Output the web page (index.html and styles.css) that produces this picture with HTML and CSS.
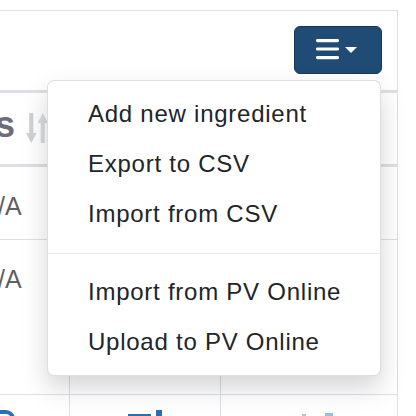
FILE: index.html
```html
<!DOCTYPE html>
<html lang="en">
<head>
<meta charset="utf-8">
<title>Ingredients</title>
<link rel="stylesheet" href="styles.css">
</head>
<body>
<div class="card">
  <div class="card-header">
    <div class="dropdown">
      <button class="btn-menu" type="button" aria-label="Menu">
        <svg class="bars" width="23" height="21" viewBox="0 0 23 21"><rect x="0" y="0" width="23" height="3.2" rx="1.4"/><rect x="0" y="8.4" width="23" height="3.2" rx="1.4"/><rect x="0" y="17" width="23" height="3.2" rx="1.4"/></svg>
        <svg class="caret" width="12" height="6" viewBox="0 0 12 6"><path d="M0 0H12L6 6Z"/></svg>
      </button>
      <div class="dropdown-menu">
        <a class="dropdown-item">Add new ingredient</a>
        <a class="dropdown-item">Export to CSV</a>
        <a class="dropdown-item">Import from CSV</a>
        <div class="dropdown-divider"></div>
        <a class="dropdown-item">Import from PV Online</a>
        <a class="dropdown-item">Upload to PV Online</a>
      </div>
    </div>
  </div>
  <div class="grid head">
    <div class="cell th"><span class="th-label">s</span><svg class="sort" width="22" height="30" viewBox="0 0 22 30"><path class="down" d="M3.2 0H7.3V20H10.5L5.25 30L0 20H3.2Z"/><path class="up" d="M18.8 30H14.7V10H11.5L16.75 0L22 10H18.8Z"/></svg></div>
    <div class="cell"></div>
    <div class="cell"></div>
  </div>
  <div class="grid row row1">
    <div class="cell td">N/A</div>
    <div class="cell"></div>
    <div class="cell"></div>
  </div>
  <div class="grid row row2">
    <div class="cell td">N/A</div>
    <div class="cell"></div>
    <div class="cell"></div>
  </div>
  <div class="grid row row3">
    <div class="cell icon-left"><svg width="34" height="34" viewBox="0 0 34 34"><rect x="2" y="2" width="29" height="29" rx="7" fill="none" stroke="#2f6fb3" stroke-width="4"/></svg></div>
    <div class="cell icon-center"><svg width="36" height="34" viewBox="0 0 36 34"><rect x="1" y="4" width="23" height="4" fill="#2d6cb0"/><rect x="29" y="0" width="6" height="8" fill="#2d6cb0"/></svg></div>
    <div class="cell icon-center"><svg width="52" height="34" viewBox="0 0 52 34"><rect x="19" y="4" width="4" height="3" fill="#a9c4e4"/><rect x="42" y="3" width="8" height="4" fill="#9fbde2"/></svg></div>
  </div>
</div>
</body>
</html>
```
FILE: styles.css
```css
html, body {
  margin: 0;
  padding: 0;
}
body {
  width: 416px;
  height: 416px;
  overflow: hidden;
  background: #ffffff;
  font-family: "Liberation Sans", Arial, sans-serif;
}
.card {
  margin: 10px 0 0 -32px;
  width: 430px;
  box-sizing: border-box;
  border: 1px solid #dfdfdf;
  border-bottom: none;
}
.card-header {
  height: 79px;
  box-sizing: border-box;
  padding: 15px 15px 0 0;
  display: flex;
  justify-content: flex-end;
  align-items: flex-start;
}
.dropdown {
  position: relative;
  height: 48px;
}
.btn-menu {
  width: 88px;
  height: 48px;
  box-sizing: border-box;
  margin: 0;
  padding: 0 0 0 21px;
  background: #1f4b74;
  border: 1px solid #15385a;
  border-radius: 6px;
  display: flex;
  align-items: center;
  gap: 6px;
}
.btn-menu svg {
  fill: #ffffff;
  display: block;
}
.bars {
  margin-top: -1px;
}
.dropdown-menu {
  position: absolute;
  top: 54px;
  right: 1px;
  width: 334px;
  box-sizing: border-box;
  background: #ffffff;
  border: 1px solid rgba(0, 0, 0, 0.13);
  border-radius: 7px;
  padding: 8px 0;
  box-shadow: 0 12px 26px rgba(0, 0, 0, 0.17);
  z-index: 10;
}
.dropdown-item {
  display: block;
  padding: 7px 20px 7px 40px;
  font-size: 24px;
  line-height: 36px;
  letter-spacing: 0.75px;
  color: #212529;
  white-space: nowrap;
}
.dropdown-divider {
  height: 1px;
  margin: 14px 0 13px;
  background: #e9ecef;
}
.grid {
  display: grid;
  grid-template-columns: 100px 151px 177px;
}
.cell {
  box-sizing: border-box;
}
.cell + .cell {
  border-left: 1px solid #dcdfe3;
}
.head {
  height: 77px;
  box-sizing: border-box;
  border-top: 3px solid #dcdfe3;
  border-bottom: 3px solid #dcdfe3;
}
.th {
  display: flex;
  align-items: flex-start;
  padding: 14px 0 0 26px;
}
.th-label {
  font-size: 36px;
  line-height: 36px;
  font-weight: bold;
  color: #6b6d7d;
}
.sort {
  margin: 6px 0 0 11px;
  flex: none;
}
.sort .down {
  fill: #cfd1d5;
}
.sort .up {
  fill: #dadbde;
}
.row {
  box-sizing: border-box;
  border-bottom: 1px solid #dcdfe3;
}
.row1 {
  height: 73px;
}
.row2 {
  height: 155px;
}
.row3 {
  height: 60px;
  border-bottom: none;
}
.td {
  padding: 21px 0 0 11px;
  font-size: 25px;
  line-height: 36px;
  color: #5f5f63;
  white-space: nowrap;
}
.icon-left {
  padding: 15px 0 0 13px;
}
.icon-left svg,
.icon-center svg {
  display: block;
}
.icon-center {
  padding-top: 15px;
  display: flex;
  justify-content: center;
  align-items: flex-start;
}
```
